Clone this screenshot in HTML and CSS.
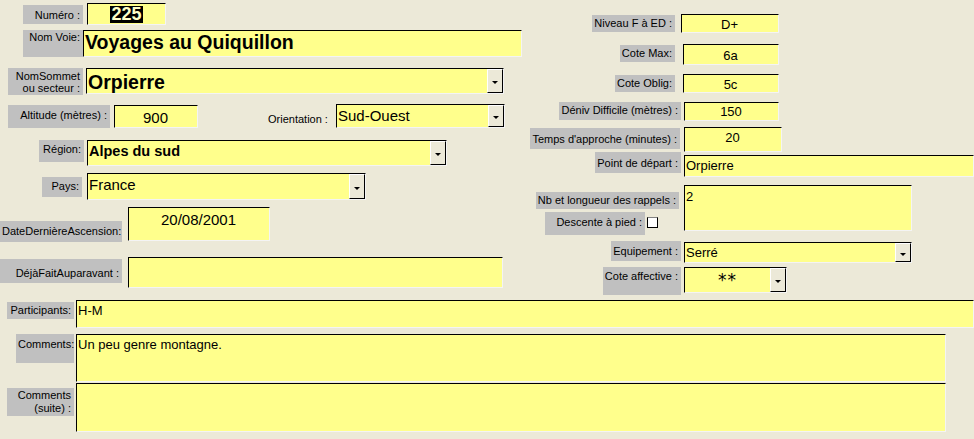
FILE: index.html
```html
<!DOCTYPE html>
<html lang="fr">
<head>
<meta charset="utf-8">
<title>Voies</title>
<link rel="stylesheet" href="styles.css">
</head>
<body>
<div class="form">
  <div class="top">
    <div class="col-left">
      <div class="row r1">
        <div class="lbl">Numéro :</div>
        <div class="fld"><span class="sel">225</span></div>
      </div>
      <div class="row r2">
        <div class="lbl">Nom Voie:</div>
        <div class="fld"><span class="val big">Voyages au Quiquillon</span></div>
      </div>
      <div class="row r3">
        <div class="lbl">NomSommet<br>ou secteur :</div>
        <div class="fld"><span class="val big">Orpierre</span><span class="dd"></span></div>
      </div>
      <div class="row r4">
        <div class="lbl">Altitude (mètres) :</div>
        <div class="fld alt"><span class="val mid center">900</span></div>
        <div class="plain">Orientation :</div>
        <div class="fld ori"><span class="val mid">Sud-Ouest</span><span class="dd"></span></div>
      </div>
      <div class="row r5">
        <div class="lbl">Région:</div>
        <div class="fld"><span class="val bold14">Alpes du sud</span><span class="dd"></span></div>
      </div>
      <div class="row r6">
        <div class="lbl">Pays:</div>
        <div class="fld"><span class="val mid">France</span><span class="dd"></span></div>
      </div>
      <div class="row r7">
        <div class="lbl">DateDernièreAscension:</div>
        <div class="fld"><span class="val mid center">20/08/2001</span></div>
      </div>
      <div class="row r8">
        <div class="lbl">DéjàFaitAuparavant :</div>
        <div class="fld"><span class="val"></span></div>
      </div>
    </div>

    <div class="col-right">
      <div class="rrow n1">
        <div class="cell"><div class="lbl">Niveau F à ED :</div></div>
        <div class="fld"><span class="val sm center">D+</span></div>
      </div>
      <div class="rrow n2">
        <div class="cell"><div class="lbl">Cote Max:</div></div>
        <div class="fld"><span class="val sm center">6a</span></div>
      </div>
      <div class="rrow n3">
        <div class="cell"><div class="lbl">Cote Oblig:</div></div>
        <div class="fld"><span class="val sm center">5c</span></div>
      </div>
      <div class="rrow n4">
        <div class="cell"><div class="lbl">Déniv Difficile (mètres) :</div></div>
        <div class="fld"><span class="val sm center">150</span></div>
      </div>
      <div class="rrow n5">
        <div class="cell"><div class="lbl">Temps d'approche (minutes) :</div></div>
        <div class="fld"><span class="val sm center">20</span></div>
      </div>
      <div class="rrow n6">
        <div class="cell"><div class="lbl">Point de départ :</div></div>
        <div class="fld"><span class="val sm">Orpierre</span></div>
      </div>
      <div class="rrow n7">
        <div class="cell">
          <div class="lbl">Nb et longueur des rappels :</div>
          <div class="check-line">
            <div class="lbl">Descente à pied :</div>
            <span class="check"></span>
          </div>
        </div>
        <div class="fld"><span class="val sm">2</span></div>
      </div>
      <div class="rrow n8">
        <div class="cell"><div class="lbl">Equipement :</div></div>
        <div class="fld"><span class="val sm">Serré</span><span class="dd"></span></div>
      </div>
      <div class="rrow n9">
        <div class="cell"><div class="lbl">Cote affective :</div></div>
        <div class="fld"><span class="val stars center">**</span><span class="dd"></span></div>
      </div>
    </div>
  </div>

  <div class="row p1">
    <div class="lbl">Participants:</div>
    <div class="fld"><span class="val sm">H-M</span></div>
  </div>
  <div class="row p2">
    <div class="lbl">Comments:</div>
    <div class="fld"><span class="val sm">Un peu genre montagne.</span></div>
  </div>
  <div class="row p3">
    <div class="lbl">Comments<br>(suite) :</div>
    <div class="fld"><span class="val sm"></span></div>
  </div>
</div>
</body>
</html>
```

FILE: styles.css
```css
html, body {
  margin: 0;
  padding: 0;
}
body {
  width: 974px;
  height: 439px;
  overflow: hidden;
  background: #ece9d8;
  font-family: "Liberation Sans", Arial, sans-serif;
  font-size: 11px;
  color: #000;
}

.form {
  display: flex;
  flex-direction: column;
}

.top {
  display: flex;
  align-items: flex-start;
  height: 295px;
  flex: none;
}

.col-left {
  width: 525px;
  flex: none;
  display: flex;
  flex-direction: column;
}

.col-right {
  width: 449px;
  flex: none;
  display: flex;
  flex-direction: column;
}

.row, .rrow {
  display: flex;
  align-items: flex-start;
  flex: none;
}

.cell {
  width: 156px;
  flex: none;
  display: flex;
  flex-direction: column;
  align-items: flex-end;
}

.lbl {
  background: #c0c0c0;
  text-align: right;
  padding: 3px 3px 0 2px;
  line-height: 13px;
  box-sizing: border-box;
  flex: none;
  white-space: nowrap;
}

.plain {
  flex: none;
  white-space: nowrap;
  line-height: 13px;
}

.fld {
  background: #ffff8c;
  border: 1px solid;
  border-color: #000 #f4f4f4 #f4f4f4 #000;
  box-sizing: border-box;
  flex: none;
  display: flex;
  align-items: flex-start;
  overflow: hidden;
  white-space: nowrap;
}

.val {
  flex: 1;
  min-width: 0;
  padding: 0 2px;
  align-self: stretch;
}

.center { text-align: center; }

.big {
  font-weight: bold;
  font-size: 19.5px;
  line-height: 22px;
  padding-left: 1px;
}

.mid {
  font-size: 15px;
  line-height: 19px;
  padding-left: 1px;
}

.bold14 {
  font-weight: bold;
  font-size: 14.5px;
  line-height: 18px;
  padding-left: 1px;
}

.sm {
  font-size: 13px;
  line-height: 17px;
  padding-left: 1px;
}

.stars {
  font-family: "DejaVu Sans", sans-serif;
  font-size: 17px;
  line-height: 20px;
  letter-spacing: 1px;
  padding-top: 2px;
}

.sel {
  background: #000;
  color: #ffffc8;
  font-weight: bold;
  font-size: 18px;
  line-height: 17px;
  padding: 0 1px;
  margin: auto;
}

.dd {
  flex: none;
  align-self: stretch;
  width: 16px;
  background: #ece9d8;
  border: 1px solid;
  border-color: #fff #000 #000 #fff;
  box-sizing: border-box;
  display: flex;
  align-items: center;
  justify-content: center;
}
.dd::after {
  content: "";
  border-left: 3px solid transparent;
  border-right: 3px solid transparent;
  border-top: 3px solid #000;
  margin-top: 3px;
}

.check-line {
  display: flex;
  align-items: flex-start;
  margin-top: 3px;
  margin-right: 23px;
}
.check {
  flex: none;
  width: 11px;
  height: 11px;
  margin: 5px 0 0 2px;
  background: #fff;
  box-sizing: border-box;
  border: 1px solid;
  border-color: #808080 #000 #000 #000;
}

/* ---------- left column ---------- */
.r1 { margin-top: 3px; }
.r1 .lbl { margin: 2px 0 0 23px; width: 60px; height: 19px; padding-top: 4px; }
.r1 .fld { margin-left: 4px; width: 79px; height: 22px; align-items: center; }

.r2 { margin-top: 5px; }
.r2 .lbl { margin-left: 23px; width: 60px; height: 27px; padding-top: 1px; }
.r2 .fld { width: 439px; height: 27px; }

.r3 { margin-top: 11px; }
.r3 .lbl { margin-left: 8px; width: 75px; height: 27px; line-height: 12px; padding-top: 2px; }
.r3 .fld { margin-left: 3px; width: 418px; height: 26px; }
.r3 .big { padding-top: 2px; }

.r4 { margin-top: 9px; }
.r4 .lbl { margin: 1px 0 0 8px; width: 102px; height: 23px; padding-top: 4px; }
.r4 .alt { margin: 1px 0 0 4px; width: 84px; height: 23px; }
.r4 .alt .val { padding-top: 2px; }
.r4 .plain { margin: 9px 0 0 70px; width: 62px; }
.r4 .ori { margin-left: 6px; width: 169px; height: 24px; }
.r4 .ori .val { padding-top: 1px; }

.r5 { margin-top: 12px; }
.r5 .lbl { margin-left: 39px; width: 45px; height: 22px; }
.r5 .fld { margin-left: 3px; width: 360px; height: 26px; }
.r5 .val { padding-top: 1px; }

.r6 { margin-top: 7px; }
.r6 .lbl { margin: 4px 0 0 42px; width: 40px; height: 20px; }
.r6 .fld { margin-left: 5px; width: 279px; height: 27px; }
.r6 .val { padding-top: 1px; }

.r7 { margin-top: 7px; }
.r7 .lbl { margin-top: 14px; width: 122px; height: 21px; padding-top: 4px; }
.r7 .fld { margin-left: 6px; width: 142px; height: 34px; }
.r7 .val { padding-top: 2px; }

.r8 { margin-top: 15px; }
.r8 .lbl { margin-top: 2px; width: 122px; height: 24px; padding-top: 8px; }
.r8 .fld { margin-left: 6px; width: 375px; height: 31px; }

/* ---------- right column ---------- */
.n1 { margin-top: 14px; }
.n1 .lbl { margin: 1px 6px 0 0; height: 17px; padding-top: 2px; }
.n1 .fld { width: 98px; height: 19px; }
.n1 .val { padding-top: 1px; }

.n2 { margin-top: 11px; }
.n2 .lbl { margin: 1px 6px 0 0; height: 17px; padding-top: 2px; }
.n2 .fld { margin-left: 2px; width: 96px; height: 21px; }
.n2 .val { padding-top: 2px; }

.n3 { margin-top: 9px; }
.n3 .lbl { margin: 1px 6px 0 0; height: 17px; padding-top: 2px; }
.n3 .fld { margin-left: 2px; width: 96px; height: 19px; }
.n3 .val { padding-top: 1px; }

.n4 { margin-top: 9px; }
.n4 .lbl { height: 18px; padding-top: 2px; }
.n4 .fld { margin-left: 3px; width: 95px; height: 19px; }

.n5 { margin-top: 6px; }
.n5 .lbl { margin: 1px 1px 0 0; height: 21px; padding-top: 5px; }
.n5 .fld { margin-left: 3px; width: 98px; height: 25px; }
.n5 .val { padding-top: 1px; }

.n6 { margin-top: 0; }
.n6 .lbl { height: 21px; padding-top: 5px; }
.n6 .fld { margin: 3px 0 0 3px; width: 290px; height: 22px; }
.n6 .val { padding-top: 1px; }

.n7 { margin-top: 8px; }
.n7 .cell > .lbl { margin: 7px 2px 0 0; height: 17px; padding-top: 2px; }
.n7 .check-line .lbl { width: 100px; height: 23px; padding-top: 4px; }
.n7 .fld { margin-left: 3px; width: 228px; height: 46px; }
.n7 .val { padding-top: 2px; }

.n8 { margin-top: 6px; }
.n8 .lbl { height: 20px; padding-top: 4px; }
.n8 .fld { margin: 1px 0 0 3px; width: 228px; height: 21px; }
.n8 .val { padding-top: 1px; }

.n9 { margin-top: 4px; }
.n9 .lbl { height: 28px; padding-top: 3px; }
.n9 .fld { margin-left: 3px; width: 103px; height: 26px; }

/* ---------- bottom ---------- */
.p1 { margin-top: 5px; }
.p1 .lbl { margin: 2px 0 0 7px; width: 67px; height: 17px; padding-top: 2px; }
.p1 .fld { margin-left: 2px; width: 898px; height: 28px; }
.p1 .val { padding-top: 1px; }

.p2 { margin-top: 6px; }
.p2 .lbl { margin-left: 16px; width: 58px; height: 29px; padding-top: 4px; }
.p2 .fld { margin-left: 2px; width: 870px; height: 48px; }
.p2 .val { padding-top: 1px; }

.p3 { margin-top: 1px; }
.p3 .lbl { margin: 5px 0 0 7px; width: 67px; height: 28px; padding-top: 1px; }
.p3 .fld { margin-left: 2px; width: 870px; height: 49px; }
```
